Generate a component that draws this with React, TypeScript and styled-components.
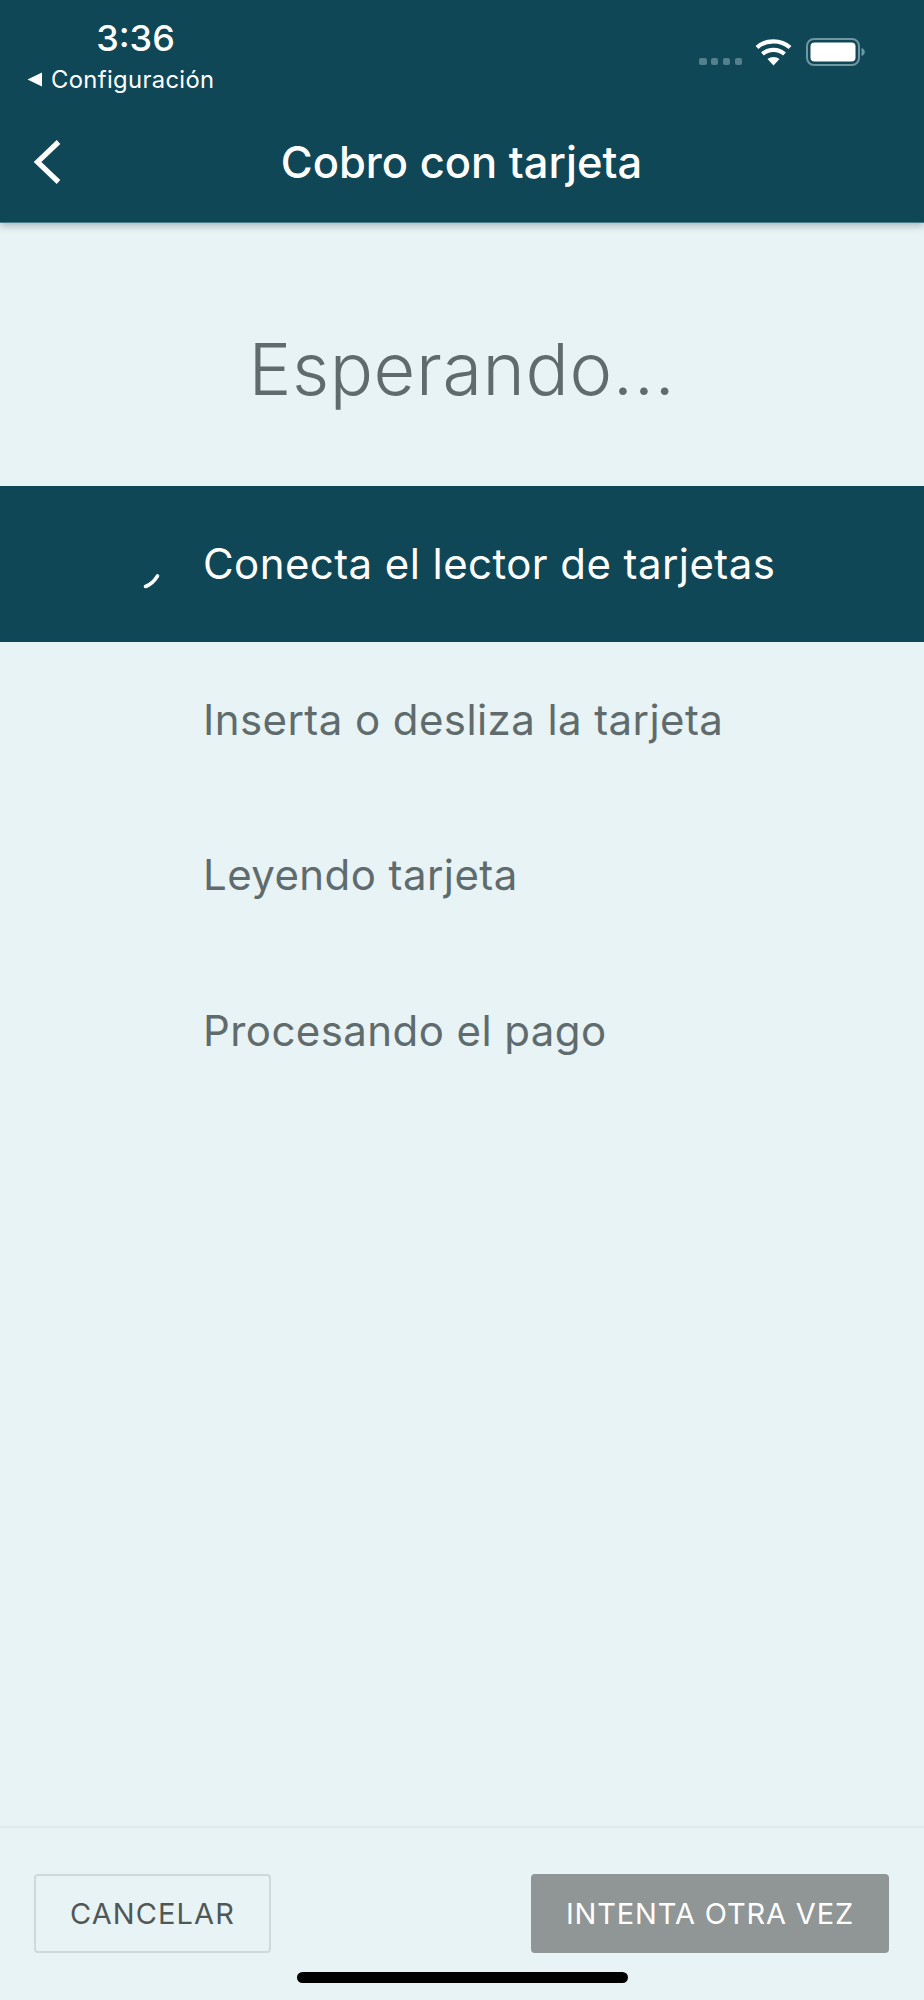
import React from "react";
import styled, { createGlobalStyle } from "styled-components";

const Global = createGlobalStyle`
  html, body { margin: 0; padding: 0; background: #e8f3f5; }
  * { box-sizing: border-box; }
`;

const Screen = styled.div`
  position: relative;
  width: 924px;
  height: 2000px;
  display: flex;
  flex-direction: column;
  background: #e8f3f5;
  font-family: Inter, "Liberation Sans", sans-serif;
`;

const Header = styled.header`
  height: 223px;
  background: #104757;
  color: #fff;
  border-bottom: 1px solid #4b7a87;
  box-shadow: 0 3px 7px rgba(40, 70, 80, 0.32);
  display: flex;
  flex-direction: column;
  flex: none;
`;

const StatusBar = styled.div`
  height: 92px;
  display: flex;
  justify-content: space-between;
`;

const StatusLeft = styled.div`
  padding: 18px 0 0 27px;
  display: flex;
  flex-direction: column;
  align-items: flex-start;
`;

const Clock = styled.div`
  width: 217px;
  text-align: center;
  font-size: 36px;
  line-height: 40px;
  font-weight: 500;
`;

const BackApp = styled.div`
  display: flex;
  align-items: center;
  gap: 9px;
  margin-top: 7px;
  font-size: 23.8px;
  line-height: 29px;
  font-weight: 400;
  letter-spacing: 0.35px;
`;

const StatusRight = styled.div`
  padding: 38px 59px 0 0;
  height: 70px;
  display: flex;
  align-items: flex-start;
`;

const Dots = styled.div`
  display: flex;
  gap: 4.3px;
  margin: 20px 13px 0 0;
`;

const Dot = styled.span`
  width: 7.5px;
  height: 7px;
  border-radius: 2px;
  background: #52808c;
`;

const WifiIcon = styled.svg`
  margin: 1px 14px 0 0;
`;

const NavBar = styled.div`
  flex: 1;
  display: grid;
  grid-template-columns: 1fr auto 1fr;
  align-items: center;
  padding: 10px 0 0 33px;
`;

const NavTitle = styled.div`
  font-size: 43.5px;
  line-height: 50px;
  font-weight: 500;
  transform: translateX(-17px);
`;

const Heading = styled.div`
  height: 263px;
  padding-top: 28px;
  display: flex;
  align-items: center;
  justify-content: center;
  font-size: 72px;
  font-weight: 300;
  color: #5f6b6c;
  letter-spacing: 0.6px;
`;

const Steps = styled.div`
  flex: 1;
  display: flex;
  flex-direction: column;
`;

const Step = styled.div<{ $active?: boolean }>`
  height: 155.5px;
  display: flex;
  align-items: center;
  padding-left: 203px;
  font-size: 42px;
  font-weight: 400;
  letter-spacing: 0.42px;
  color: ${(p) => (p.$active ? "#ffffff" : "#5f6b6c")};
  background: ${(p) => (p.$active ? "#104757" : "transparent")};
`;

const Spinner = styled.svg`
  position: absolute;
  left: 142px;
  top: 570px;
`;

const Footer = styled.footer`
  height: 174px;
  flex: none;
  border-top: 2px solid #dde9ea;
  padding: 46px 35px 0 34px;
  display: flex;
  justify-content: space-between;
  align-items: flex-start;
`;

const Button = styled.div<{ $primary?: boolean }>`
  height: 79px;
  display: flex;
  align-items: center;
  justify-content: center;
  border-radius: 4px;
  font-size: 29px;
  font-weight: 400;
  letter-spacing: ${(p) => (p.$primary ? "0.85px" : "1.1px")};
  width: ${(p) => (p.$primary ? "358px" : "237px")};
  color: ${(p) => (p.$primary ? "#ffffff" : "#4f5757")};
  background: ${(p) => (p.$primary ? "#8f9695" : "transparent")};
  border: 2px solid ${(p) => (p.$primary ? "#8f9695" : "#cdd9da")};
`;

const HomeBar = styled.div`
  position: absolute;
  left: 297px;
  top: 1972px;
  width: 331px;
  height: 11px;
  border-radius: 6px;
  background: #000;
`;

export default function App() {
  return (
    <Screen>
      <Global />
      <Header>
        <StatusBar>
          <StatusLeft>
            <Clock>3:36</Clock>
            <BackApp>
              <svg width="15" height="15" viewBox="0 0 15 15">
                <path d="M0.5 7.5 L15 0.5 V14.5 Z" fill="#fff" />
              </svg>
              Configuración
            </BackApp>
          </StatusLeft>
          <StatusRight>
            <Dots>
              <Dot />
              <Dot />
              <Dot />
              <Dot />
            </Dots>
            <WifiIcon width="37" height="27" viewBox="0 0 37 27">
              <path d="M18.5 26.5 L12.5 20 C15.8 17.2 21.2 17.2 24.5 20 Z" fill="#fff" />
              <path d="M7.5 15 C13.5 9.5 23.5 9.5 29.5 15" fill="none" stroke="#fff" strokeWidth="4.2" />
              <path d="M2 8.5 C11 0.2 26 0.2 35 8.5" fill="none" stroke="#fff" strokeWidth="4.2" />
            </WifiIcon>
            <svg width="59" height="28" viewBox="0 0 59 28">
              <rect x="1" y="1" width="52" height="26" rx="7" fill="none" stroke="#6f97a2" strokeWidth="2" />
              <rect x="4.5" y="4.5" width="45" height="19" rx="4" fill="#fff" />
              <path d="M55.5 10 C58 11 58.8 12.5 58.8 14 C58.8 15.5 58 17 55.5 18 Z" fill="#6f97a2" />
            </svg>
          </StatusRight>
        </StatusBar>
        <NavBar>
          <svg width="28" height="44" viewBox="0 0 28 44">
            <path d="M25.5 2 L4.5 22 L25.5 42" fill="none" stroke="#fff" strokeWidth="5.2" />
          </svg>
          <NavTitle>Cobro con tarjeta</NavTitle>
        </NavBar>
      </Header>
      <Heading>Esperando...</Heading>
      <Steps>
        <Step $active>Conecta el lector de tarjetas</Step>
        <Step>Inserta o desliza la tarjeta</Step>
        <Step>Leyendo tarjeta</Step>
        <Step>Procesando el pago</Step>
      </Steps>
      <Spinner width="20" height="20" viewBox="0 0 20 20">
        <path d="M3.5 16.5 C8 15 12 11.5 15.5 6" fill="none" stroke="#fff" strokeWidth="3.6" strokeLinecap="round" />
      </Spinner>
      <Footer>
        <Button>CANCELAR</Button>
        <Button $primary>INTENTA OTRA VEZ</Button>
      </Footer>
      <HomeBar />
    </Screen>
  );
}
